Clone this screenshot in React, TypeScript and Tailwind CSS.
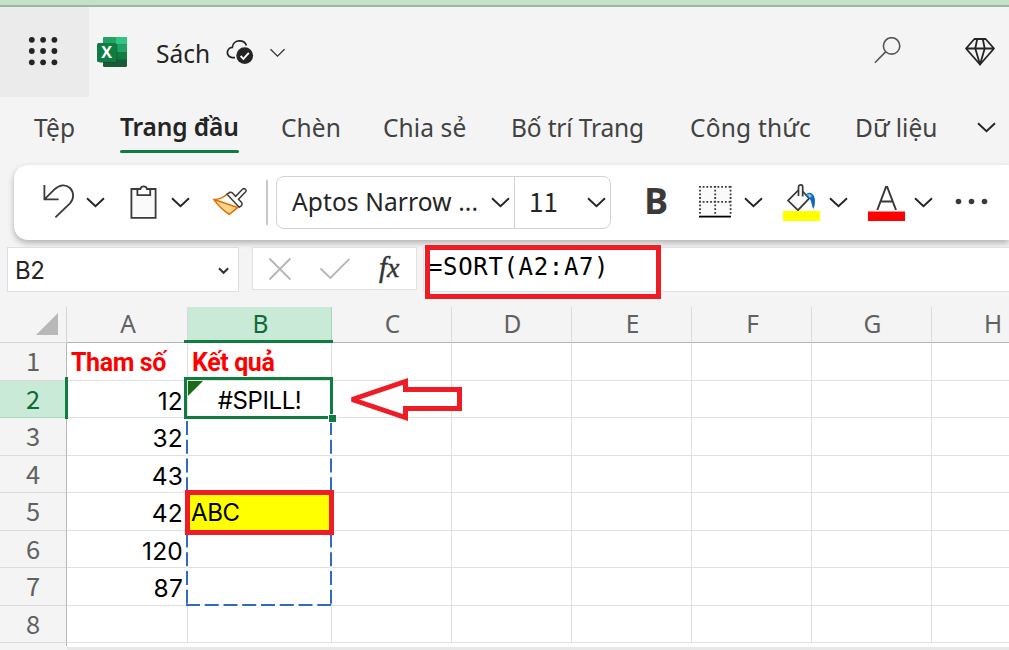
import { ReactNode } from "react";
import { clsx } from "clsx";

const COLUMNS = [
  { name: "A", width: "w-[121px]" },
  { name: "B", width: "w-[144px]" },
  { name: "C", width: "w-[120px]" },
  { name: "D", width: "w-[120px]" },
  { name: "E", width: "w-[120px]" },
  { name: "F", width: "w-[120px]" },
  { name: "G", width: "w-[120px]" },
  { name: "H", width: "w-[121px]" },
];

const ROWS = [
  { a: "Tham số", b: "Kết quả" },
  { a: "12", b: "#SPILL!" },
  { a: "32", b: "" },
  { a: "43", b: "" },
  { a: "42", b: "ABC" },
  { a: "120", b: "" },
  { a: "87", b: "" },
  { a: "", b: "" },
];

const TABS = [
  { label: "Tệp", box: "w-[86px]", text: "tracking-[0.2px]" },
  { label: "Trang đầu", box: "w-[161px]", text: "tracking-[-0.15px]", active: true },
  { label: "Chèn", box: "w-[102px]", text: "tracking-[0.1px]" },
  { label: "Chia sẻ", box: "w-[128px]", text: "tracking-[0.1px]" },
  { label: "Bố trí Trang", box: "w-[179px]", text: "tracking-[-0.15px]" },
  { label: "Công thức", box: "w-[165px]", text: "tracking-[0.2px]" },
  { label: "Dữ liệu", box: "w-[122px]", text: "tracking-[0px]" },
];

function Chevron({ className }: { className?: string }) {
  return (
    <svg
      className={clsx("h-[11px] w-[19px] shrink-0", className)}
      viewBox="0 0 19 11"
      fill="none"
      stroke="#242424"
      strokeWidth="1.9"
    >
      <path d="M1 1.2 9.5 9.2 18 1.2" />
    </svg>
  );
}

// Ribbon icons share one 75px tall strip, so every drawing keeps the same baseline.
function RibbonIcon({
  width,
  className,
  children,
}: {
  width: number;
  className: string;
  children: ReactNode;
}) {
  return (
    <svg
      className={clsx("shrink-0", className)}
      width={width}
      height={75}
      viewBox={`0 0 ${width} 75`}
      fill="none"
      stroke="#3b3a39"
      strokeWidth="1.8"
    >
      {children}
    </svg>
  );
}

function ExcelLogo() {
  return (
    <svg className="ml-2 h-[31px] w-[31px] shrink-0" viewBox="0 0 31 31">
      <rect x="6" y="0" width="24" height="30" rx="1.5" fill="#185c37" />
      <path d="M7.5 0H18.5V7.5H6V1.5A1.5 1.5 0 0 1 7.5 0Z" fill="#21a366" />
      <path d="M18.5 0H28.5A1.5 1.5 0 0 1 30 1.5V7.5H18.5Z" fill="#33c481" />
      <path d="M6 7.5H18.5V15H6Z" fill="#21a366" />
      <path d="M18.5 7.5H30V15H18.5Z" fill="#21a366" />
      <path d="M18.5 15H30V22.5H18.5Z" fill="#107c41" />
      <rect x="2" y="7" width="18.5" height="19" rx="1.5" fill="#0b4426" opacity="0.45" />
      <rect x="0" y="6" width="19.5" height="19" rx="1.6" fill="#107c41" />
      <text
        x="9.6"
        y="21"
        textAnchor="middle"
        fill="#fff"
        fontFamily="Open Sans, sans-serif"
        fontWeight="700"
        fontSize="16"
      >
        X
      </text>
    </svg>
  );
}

function TitleBar() {
  return (
    <header className="flex h-[90px] items-start">
      <div className="flex h-[90px] w-[89px] shrink-0 bg-[#ebebeb] pt-[29px] pl-[28px]">
        <svg className="h-[30px] w-[32px]" viewBox="0 0 32 30" fill="#242424">
          {[3.8, 15, 26.3].map((y) =>
            [3.8, 15.1, 26.4].map((x) => (
              <circle key={`${x}-${y}`} cx={x} cy={y} r="2.9" />
            ))
          )}
        </svg>
      </div>
      <div className="flex h-[90px] flex-1 items-start pt-[30px]">
        <ExcelLogo />
        <span className="ml-[28px] mt-[1px] w-[60px] whitespace-nowrap text-[24.5px] leading-[32px]">
          Sách
        </span>
        <svg
          className="ml-[10px] mt-[1px] h-[30px] w-[30px]"
          viewBox="0 0 30 30"
          fill="none"
        >
          <path
            d="M9 19.6H6.6A5.1 5.1 0 0 1 6.3 9.4C6.6 5.2 9.8 2.8 13.4 2.8C17 2.8 19.6 4.8 20.4 7.6"
            stroke="#242424"
            strokeWidth="1.7"
          />
          <circle cx="18.7" cy="17.6" r="8.4" fill="#242424" />
          <path d="m14.6 18 2.8 2.8 5.4-6" stroke="#fff" strokeWidth="1.9" />
        </svg>
        <svg
          className="ml-[14px] mt-[11px] h-[10px] w-[16px]"
          viewBox="0 0 16 10"
          fill="none"
          stroke="#333"
          strokeWidth="1.3"
        >
          <path d="m.5 1.3 7 6.8 7-6.8" />
        </svg>
        <svg
          className="ml-auto h-[28px] w-[30px]"
          viewBox="0 0 30 28"
          fill="none"
          stroke="#555"
          strokeWidth="1.6"
        >
          <circle cx="18.6" cy="8.9" r="8.2" />
          <path d="M12.6 14.9 1.9 25.8" />
        </svg>
        <svg
          className="ml-[61px] mr-[13px] h-[30px] w-[32px]"
          viewBox="0 0 32 30"
          fill="none"
          stroke="#242424"
          strokeWidth="1.8"
          strokeLinejoin="round"
        >
          <path d="M10.4 2H21.6L30 11.5 16 27.5 2 11.5ZM2 11.5H30" />
          <path d="M13.2 2 11.3 11.5 16 27.5 20.7 11.5 18.8 2" />
        </svg>
      </div>
    </header>
  );
}

function TabStrip() {
  return (
    <nav className="flex h-[68px] pl-[34px] pt-[13px]">
      {TABS.map((tab) => (
        <div key={tab.label} className={clsx("shrink-0", tab.box)}>
          <span
            className={clsx(
              "inline-block whitespace-nowrap text-[24.5px] leading-[36px]",
              tab.text,
              tab.active
                ? "-mt-px mb-px font-semibold text-[#242424]"
                : "text-[#424242]"
            )}
          >
            {tab.label}
          </span>
          {tab.active && <div className="mt-[4px] h-[3px] w-[119px] rounded-full bg-[#107c41]" />}
        </div>
      ))}
      <Chevron className="mt-[12px]" />
    </nav>
  );
}

function Ribbon() {
  return (
    <div className="relative z-10 ml-[14px] flex h-[75px] items-center rounded-l-[14px] bg-white shadow-[0_3px_6px_rgba(0,0,0,0.28)]">
      <RibbonIcon width={33} className="ml-[28px]">
        <path d="M2.4 20V34.3H16.6M2.4 34.3 12.2 24.7C17.4 19.6 23.5 18.9 27.9 23C32.4 27.4 32 34 28 38.3L13.4 52.4" />
      </RibbonIcon>
      <Chevron className="ml-[11px]" />
      <RibbonIcon width={29} className="ml-[24px]">
        <path d="M2.4 24H26.6V52.8H2.4Z" fill="#fafafa" />
        <path
          d="M8.4 24H11.4A3.4 3.4 0 0 1 18 24H21.2V30.2H8.4Z"
          fill="#fff"
        />
      </RibbonIcon>
      <Chevron className="ml-[13px]" />
      <RibbonIcon width={36} className="ml-[22px]">
        <path
          d="M2 34.6C7.5 34.4 11.8 32.4 14.8 29.3L27 42 17.3 49.3C13.2 46.4 6.8 41.4 2 34.6Z"
          fill="#fafafa"
          stroke="none"
        />
        <path d="M4.5 36 25.5 42.8 17.3 49.3C12 45.8 8 41.5 4.5 36Z" fill="#f9d58a" stroke="none" />
        <path
          d="M14.8 29.3C11.8 32.4 7.5 34.4 2 34.6C6.8 41.4 11.6 45.8 17.3 49.3L26 42.4M2 34.6 25.5 42.6"
          stroke="#e07000"
          strokeWidth="1.6"
        />
        <path
          d="M15 29.2 18 27.3Q19.4 26.9 20.5 28L23.6 31.3 30.5 24.3Q32 23 33.4 24.3T33.4 27L26.5 34.2 29.6 37.4Q30.7 39 29.5 40.7L27.2 42.3Z"
          fill="#fff"
          strokeWidth="1.5"
        />
      </RibbonIcon>
      <div className="ml-[18px] h-[45px] w-[2px] shrink-0 bg-[#c8c8c8]" />
      <div className="ml-[8px] flex h-[53px] w-[335px] shrink-0 rounded-[8px] border border-[#d1d1d1] text-[#242424]">
        <div className="flex w-[238px] items-center border-r border-[#d1d1d1]">
          <span className="ml-[15px] w-[200px] whitespace-nowrap text-[24.5px] tracking-[0.12px]">
            Aptos Narrow ...
          </span>
          <Chevron className="-ml-[1px]" />
        </div>
        <div className="flex flex-1 items-center">
          <span className="-mt-[4px] ml-[14px] w-[58px] font-['Noto_Sans_CJK_SC',sans-serif] text-[26px] leading-[30px]">
            11
          </span>
          <Chevron />
        </div>
      </div>
      <span className="-mt-[4px] ml-[33px] w-[25px] shrink-0 font-['Open_Sans',sans-serif] text-[36px] leading-[40px] font-bold text-[#3b3a39]">
        B
      </span>
      <RibbonIcon width={35} className="ml-[29px]">
        <path d="M2 22H33V52H2Z" fill="#fafafa" stroke="none" />
        <path
          d="M1 21.8H34M1 36.8H34M2 21V50M17.2 21V50M32.6 21V50"
          strokeDasharray="1.8 1.9"
        />
        <path d="M1 51.6H33" stroke="#000" />
      </RibbonIcon>
      <Chevron className="ml-[11px]" />
      <RibbonIcon width={37} className="ml-[20px]">
        <path
          d="M15.5 25 5 35.6 15 45.2 26.2 33.4 19.8 26.5"
          fill="#fafafa"
          strokeWidth="1.7"
        />
        <path d="M15.5 31V22Q15.7 19.8 17.8 19.8T19.7 22V31.5" fill="#fafafa" strokeWidth="1.7" />
        <path
          d="M22.5 30C25 26.5 29.5 27.3 31.2 31.5C32.5 35 32.3 40 30.4 44C28.8 41.5 28.8 37.5 27.2 34.5Z"
          fill="#0f6cbd"
          stroke="none"
        />
        <path d="M23.8 29.6C26 28.3 28 29.3 28.8 31.2L27 33Z" fill="#83beec" stroke="none" />
        <path d="M0 46H37V56H0Z" fill="#ff0" stroke="none" />
      </RibbonIcon>
      <Chevron className="ml-[9px]" />
      <RibbonIcon width={37} className="ml-[20px]">
        <path d="M9.3 45 18 22H19.2L28 45M12.6 36.6H24.8" strokeWidth="2" />
        <path d="M0 46.5H37V56H0Z" fill="#f00" stroke="none" />
      </RibbonIcon>
      <Chevron className="ml-[9px]" />
      <RibbonIcon width={33} className="ml-[22px]">
        {[3.5, 16.5, 29.5].map((x) => (
          <circle key={x} cx={x} cy="36.5" r="2.8" fill="#3b3a39" stroke="none" />
        ))}
      </RibbonIcon>
    </div>
  );
}

function FormulaBar() {
  return (
    <div className="relative z-20 flex h-[67px] items-start pl-[7px] pt-[7px]">
      <div className="flex h-[45px] w-[232px] shrink-0 items-center border border-[#dedede] bg-white">
        <span className="mt-[2px] ml-[7px] w-[203px] font-[Inter,sans-serif] text-[24px] tracking-[-0.4px] text-[#242424]">
          B2
        </span>
        <svg className="mt-[3px] h-[8px] w-[12px]" viewBox="0 0 12 8" fill="none" stroke="#333" strokeWidth="2">
          <path d="m1 1.2 4.6 4.6 4.6-4.6" />
        </svg>
      </div>
      <div className="ml-[13px] flex h-[43px] w-[165px] shrink-0 items-center border border-[#e1e1e1] bg-white">
        <svg
          className="h-[24px] w-[100px]"
          viewBox="0 0 100 24"
          fill="none"
          stroke="#b5b5b5"
          strokeWidth="1.8"
        >
          <path d="m16.4 1.5 21 21M37.4 1.5l-21 21M67.4 11.5 77.4 21 96.4 1.8" />
        </svg>
        <span className="-mt-[3px] ml-[26px] font-['Liberation_Serif',serif] text-[29px] leading-[34px] text-[#333] italic [-webkit-text-stroke:0.4px_#333]">
          f<span className="text-[28px]">x</span>
        </span>
      </div>
      <div className="relative ml-[6px] h-[45px] flex-1 border border-r-0 border-[#e1e1e1] bg-white">
        <span className="ml-[4px] block font-['DejaVu_Sans_Mono',monospace] text-[24px] leading-[38px] tracking-[0.65px] text-black">
          =SORT(A2:A7)
        </span>
        <div className="absolute -top-[3px] left-[1px] h-[54px] w-[236px] border-5 border-[#ee1c25]" />
      </div>
    </div>
  );
}

function ColumnHeaders() {
  return (
    <div className="flex h-[36px] w-[1053px]">
      <div className="flex w-[67px] shrink-0 items-start justify-end border-r border-b border-[#d6d6d6] pr-[8px] pt-[6px]">
        <svg className="h-[22px] w-[22px]" viewBox="0 0 22 22">
          <path d="M22 0V22H0Z" fill="#b8b8b8" />
        </svg>
      </div>
      {COLUMNS.map((col) => (
        <div
          key={col.name}
          className={clsx(
            "flex shrink-0 items-center justify-center border-b pb-[2px] pl-[2px] text-[24.5px] leading-[30px]",
            col.width,
            col.name === "B"
              ? "border-r border-r-[#a0d8b9] border-b-[#107c41] bg-[#caead8] text-[#0e6b37]"
              : "border-r border-r-[#dadada] border-b-[#b5b5b5] text-[#616161]"
          )}
        >
          {col.name}
        </div>
      ))}
    </div>
  );
}

function Sheet() {
  return (
    <div className="relative h-[343px] overflow-hidden">
      <ColumnHeaders />
      {ROWS.map((row, i) => (
        <div
          key={i}
          className={clsx("flex w-[1053px]", i % 2 === 0 ? "h-[38px]" : "h-[37px]")}
        >
          <div
            className={clsx(
              "flex w-[67px] shrink-0 items-center justify-center border-r border-b pb-[3px] font-['Noto_Sans_CJK_SC',sans-serif] text-[25.5px] leading-[30px]",
              i === 1
                ? "border-r-[#107c41] border-b-[#a0d8b9] bg-[#caead8] text-[#0e6b37]"
                : "border-r-[#b8b8b8] border-b-[#dadada] text-[#616161]"
            )}
          >
            {i + 1}
          </div>
          {COLUMNS.map((col) => (
            <div
              key={col.name}
              className={clsx(
                "flex shrink-0 items-center border-r border-b border-[#e0e0e0] whitespace-nowrap",
                col.width,
                i === 4 && col.name === "B" ? "bg-[#ff0]" : "bg-white",
                i === 0
                  ? "pt-[2px] pl-[4px] font-[Roboto,sans-serif] text-[25px] font-bold tracking-[-0.4px] text-[#f00]"
                  : "pt-[3px] font-[Inter,sans-serif] leading-[30px] text-black",
                i > 0 && col.name === "A" && "justify-end pr-[4px] text-[24.5px] tracking-[0.2px]",
                i > 0 && col.name === "B" && "text-[24px] tracking-[-0.4px]",
                i === 1 && col.name === "B" && "justify-center",
                i === 4 && col.name === "B" && "pl-[3px]"
              )}
            >
              {col.name === "A" && row.a}
              {col.name === "B" && row.b}
            </div>
          ))}
        </div>
      ))}
      <div className="flex h-[7px]">
        <div className="h-[3px] w-[67px] border-r border-[#b8b8b8]" />
        <div className="flex-1 border-t-4 border-white bg-[#e8e8e8]" />
      </div>
      <Overlays />
    </div>
  );
}

// Selection frame, spill outline and the red annotations drawn over the cells
function Overlays() {
  return (
    <>
      <div className="absolute top-[33px] left-[184px] h-[3px] w-[149px] bg-[#107c41]" />
      <div className="absolute top-[70px] left-[65px] h-[42px] w-[3px] bg-[#107c41]" />
      <svg
        className="absolute top-[112px] left-[184px] h-[190px] w-[150px]"
        viewBox="0 0 150 190"
        fill="none"
        strokeWidth="2"
      >
        <path d="M3 0V187M147 0V187M2 186H148" stroke="#fff" />
        <path
          d="M3 2V187M147 2V187M2 186H148"
          stroke="#316ac5"
          strokeDasharray="14 4.75"
        />
      </svg>
      <div className="absolute top-[70px] left-[184px] h-[42px] w-[149px] border-3 border-[#107c41]" />
      <svg className="absolute top-[74px] left-[188px] h-[15px] w-[15px]" viewBox="0 0 15 15">
        <path d="M0 0H15L0 15Z" fill="#1b6b1b" />
      </svg>
      <div className="absolute top-[107px] left-[328px] h-[9px] w-[9px] border border-white bg-[#107c41]" />
      <div className="absolute top-[183px] left-[185px] h-[45px] w-[149px] border-5 border-[#ee1c25]" />
      <svg
        className="absolute top-[70px] left-[348px] h-[46px] w-[116px]"
        viewBox="0 0 116 46"
        fill="#fff"
        stroke="#ee1c25"
        strokeWidth="5"
        strokeMiterlimit="2"
      >
        <path d="M4 22.5 57.5 4.5V12.5H111.5V31.5H57.5V40.5Z" />
      </svg>
    </>
  );
}

export default function App() {
  return (
    <div className="h-[650px] w-[1009px] overflow-hidden bg-[#f4f4f4] font-['Noto_Sans','Open_Sans',sans-serif] text-[#242424]">
      <div className="h-[7px] border-b-2 border-[#9db69d] bg-[#c5e2c6]" />
      <TitleBar />
      <TabStrip />
      <Ribbon />
      <FormulaBar />
      <Sheet />
    </div>
  );
}
